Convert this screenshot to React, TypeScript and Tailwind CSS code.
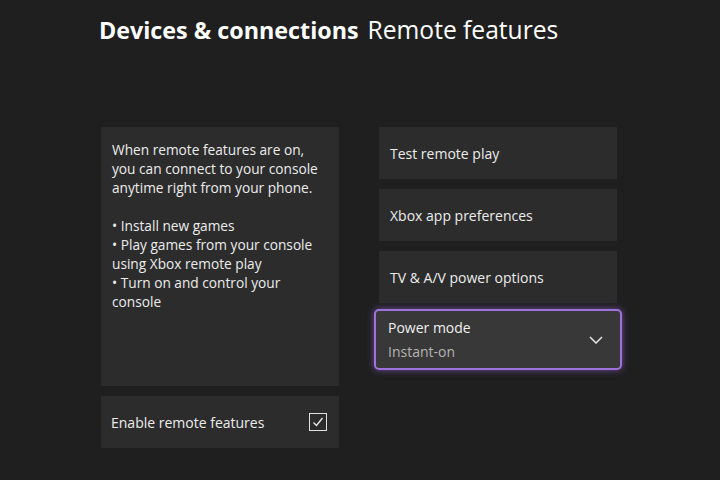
const font = { fontFamily: '"Open Sans", "Noto Sans", sans-serif' };

function Tile({ label }: { label: string }) {
  return (
    <div className="h-[52px] bg-[#2c2c2c] flex items-center px-[11px] text-[14px] text-[#ececec]">
      {label}
    </div>
  );
}

export default function App() {
  return (
    <div className="w-[720px] h-[480px] bg-[#1f1f1f] overflow-hidden" style={font}>
      <div className="pl-[99px] pt-[13px] h-[127px] text-white leading-[34px] flex items-baseline">
        <span className="font-bold text-[23.3px]">Devices &amp; connections</span>
        <span className="font-normal text-[24.6px] ml-[9px]">Remote features</span>
      </div>
      <div className="flex gap-[40px] pl-[101px]">
        <div className="w-[238px] flex flex-col gap-[10px]">
          <div className="h-[259px] bg-[#2c2c2c] px-[11px] pt-[13px] text-[13.7px] leading-[19px] text-[#ececec]">
            <p>When remote features are on, you can connect to your console anytime right from your phone.</p>
            <p className="mt-[19px]">• Install new games</p>
            <p>• Play games from your console using Xbox remote play</p>
            <p>• Turn on and control your console</p>
          </div>
          <div className="h-[52px] bg-[#2c2c2c] flex items-center justify-between pl-[10px] pr-[12px] text-[14px] text-[#ececec]">
            <span>Enable remote features</span>
            <span className="w-[18px] h-[18px] border-[1.5px] border-[#e0e0e0] flex items-center justify-center">
              <svg width="14" height="14" viewBox="0 0 14 14" fill="none" stroke="#e8e8e8" strokeWidth="1.4">
                <path d="M2.5 7.5 L5.5 10.5 L11.5 3" />
              </svg>
            </span>
          </div>
        </div>
        <div className="w-[238px] flex flex-col gap-[10px]">
          <Tile label="Test remote play" />
          <Tile label="Xbox app preferences" />
          <Tile label="TV & A/V power options" />
          <div className="-mx-[5px] -mt-[4px] h-[61px] rounded-[5px] border-[2.5px] border-[#9d72da] bg-[#383838] shadow-[0_0_7px_rgba(150,100,225,0.65)] flex items-center justify-between pl-[12px] pr-[17px]">
            <div className="flex flex-col">
              <span className="text-[14px] leading-[24px] text-[#f0f0f0]">Power mode</span>
              <span className="text-[14px] leading-[24px] text-[#b4b4b4]">Instant-on</span>
            </div>
            <svg width="14" height="8" viewBox="0 0 14 8" fill="none" stroke="#e6e6e6" strokeWidth="1.5">
              <path d="M1 1 L7 7 L13 1" />
            </svg>
          </div>
        </div>
      </div>
    </div>
  );
}
